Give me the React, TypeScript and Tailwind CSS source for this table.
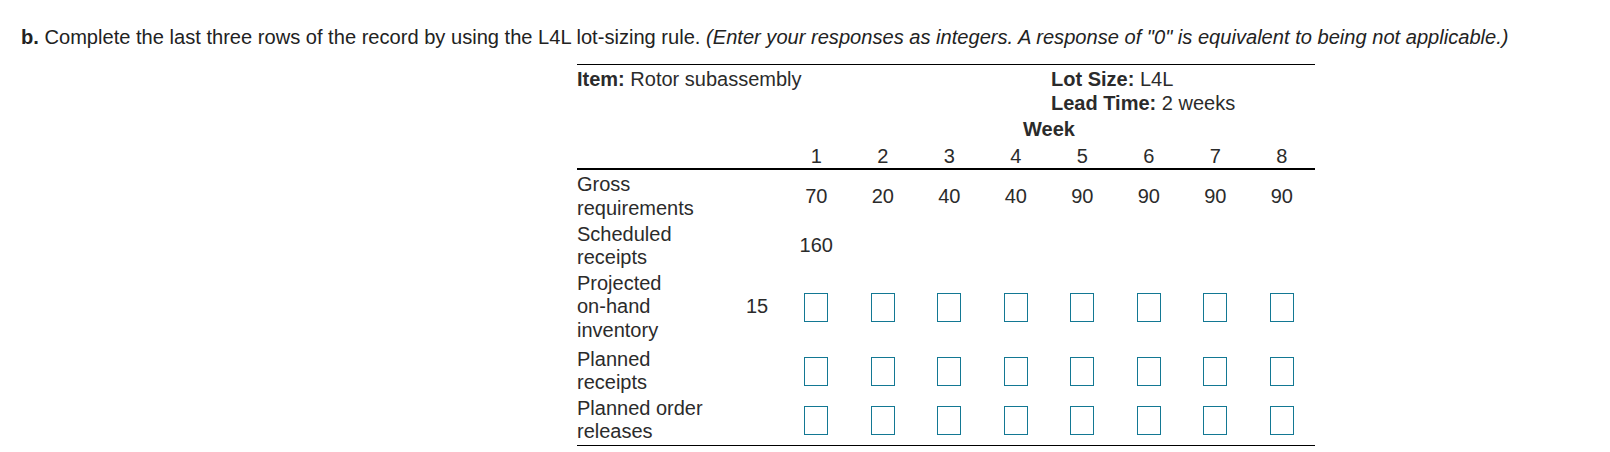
const weeks = [1, 2, 3, 4, 5, 6, 7, 8]
const gross = [70, 20, 40, 40, 90, 90, 90, 90]

// label column + initial-inventory column, then 8 week columns
function Row({
  label,
  initial,
  cells,
  className = '',
}: {
  label: React.ReactNode
  initial?: React.ReactNode
  cells: React.ReactNode[]
  className?: string
}) {
  return (
    <div className={`flex items-center py-[1px] ${className}`}>
      <div className="w-[154px] shrink-0 pr-[14px]">{label}</div>
      <div className="w-[52px] shrink-0 text-center">{initial}</div>
      {cells.map((c, i) => (
        <div key={i} className="flex w-[66.5px] shrink-0 justify-center">
          {c}
        </div>
      ))}
    </div>
  )
}

function Box() {
  return <span className="block h-[29px] w-[24px] border border-[#137893] bg-white" />
}

export default function App() {
  const boxes = weeks.map((w) => <Box key={w} />)

  return (
    <div className="min-h-[452px] w-[1610px] bg-white text-[#2b2b2b]" style={{ fontFamily: '"Liberation Sans", Arial, sans-serif' }}>
      <p className="pl-[21px] pt-[25px] text-[20.1px] leading-[24px] text-[#222]">
        <span className="font-bold">b.</span> Complete the last three rows of the record by using the L4L lot-sizing rule.{' '}
        <i>(Enter your responses as integers. A response of "0" is equivalent to being not applicable.)</i>
      </p>

      <div className="ml-[577px] mt-[15px] w-[738px] border-b border-t border-black text-[20px] leading-[23.6px]">
        {/* header */}
        <div className="border-b-2 border-black pt-[3px]">
          <div className="flex">
            <div className="w-[474px] shrink-0">
              <span className="font-bold">Item:</span> Rotor subassembly
            </div>
            <div>
              <span className="font-bold">Lot Size:</span> L4L
            </div>
          </div>
          <div className="pl-[474px]">
            <span className="font-bold">Lead Time:</span> 2 weeks
          </div>
          <div className="mt-[2.5px] pl-[206px] text-center font-bold">Week</div>
          <div className="mt-[3.5px] flex pl-[206px]">
            {weeks.map((w) => (
              <div key={w} className="w-[66.5px] text-center">
                {w}
              </div>
            ))}
          </div>
        </div>

        {/* body */}
        <div className="pt-[2px]">
          <Row label="Gross requirements" cells={gross.map((g) => g)} />
          <Row label="Scheduled receipts" cells={['160', '', '', '', '', '', '', '']} />
          <Row
            label={
              <>
                Projected <span className="whitespace-nowrap">on-hand</span> inventory
              </>
            }
            initial="15"
            cells={boxes}
            className="mb-[3px]"
          />
          <Row label="Planned receipts" cells={boxes} />
          <Row label="Planned order releases" cells={boxes} />
        </div>
      </div>
    </div>
  )
}
